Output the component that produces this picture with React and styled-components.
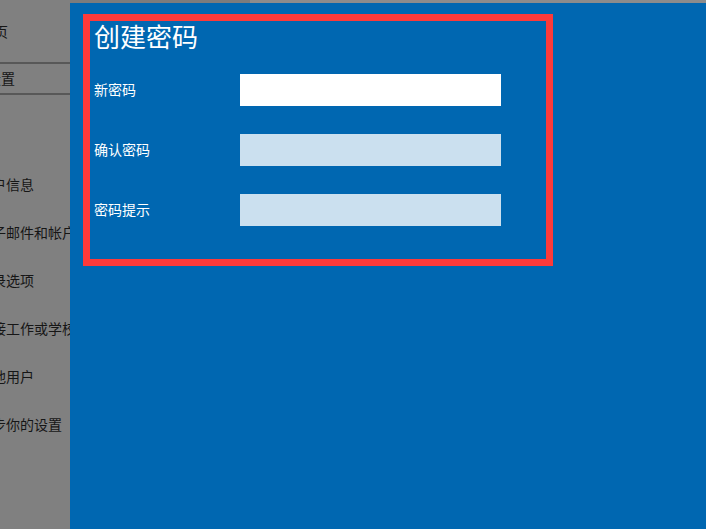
import React from "react";
import styled, { createGlobalStyle } from "styled-components";

const GlobalStyle = createGlobalStyle`
    body {
        margin: 0;
        font-family: "Noto Sans CJK SC", "Noto Sans", sans-serif;
    }
`;

const navItems = ["帐户信息", "电子邮件和帐户", "登录选项", "连接工作或学校帐户", "其他用户", "同步你的设置"];

const fields = [
    { label: "新密码", active: true },
    { label: "确认密码", active: false },
    { label: "密码提示", active: false },
];

function App() {
    return (
        <>
            <GlobalStyle />
            <Screen>
                <SidePane>
                    <HomeRow>主页</HomeRow>
                    <SearchBox>查找设置</SearchBox>
                    <NavList>
                        {navItems.map((item) => (
                            <NavItem key={item}>{item}</NavItem>
                        ))}
                    </NavList>
                </SidePane>
                <Dialog>
                    <TopStrip>
                        <StripDark />
                    </TopStrip>
                    <BlueArea>
                        <Frame>
                            <Title>创建密码</Title>
                            <Form>
                                {fields.map((field) => (
                                    <FieldRow key={field.label}>
                                        <Label>{field.label}</Label>
                                        <Input $active={field.active} />
                                    </FieldRow>
                                ))}
                            </Form>
                        </Frame>
                    </BlueArea>
                </Dialog>
            </Screen>
        </>
    );
}

const Screen = styled.div`
    display: flex;
    width: 706px;
    height: 529px;
    overflow: hidden;
`;
const SidePane = styled.div`
    width: 70px;
    flex-shrink: 0;
    background-color: #808080;
    overflow: hidden;
    display: flex;
    flex-direction: column;
    padding-top: 7px;
    box-sizing: border-box;
    color: #161616;
    font-size: 14px;
`;
const HomeRow = styled.div`
    height: 48px;
    line-height: 48px;
    margin-left: -20px;
    white-space: nowrap;
`;
const SearchBox = styled.div`
    margin-top: 7px;
    margin-left: -41px;
    width: 140px;
    height: 29px;
    line-height: 29px;
    border-top: 2px solid #585858;
    border-bottom: 2px solid #585858;
    white-space: nowrap;
`;
const NavList = styled.div`
    margin-top: 65px;
    display: flex;
    flex-direction: column;
`;
const NavItem = styled.div`
    height: 48px;
    line-height: 48px;
    margin-left: -22px;
    white-space: nowrap;
`;
const Dialog = styled.div`
    flex: 1;
    display: flex;
    flex-direction: column;
`;
const TopStrip = styled.div`
    height: 3px;
    background-color: #8c8c8c;
    display: flex;
`;
const StripDark = styled.div`
    width: 180px;
    background-color: #7c7c7c;
`;
const BlueArea = styled.div`
    flex: 1;
    background-color: #0067b1;
    padding: 11px 0 0 13px;
`;
const Frame = styled.div`
    width: 470px;
    height: 252px;
    box-sizing: border-box;
    border: 7px solid #fd3a3a;
    padding: 0 0 0 4px;
    color: #ffffff;
`;
const Title = styled.h1`
    margin: -1px 0 0;
    font-size: 26px;
    font-weight: 400;
    line-height: 32px;
`;
const Form = styled.div`
    margin-top: 22px;
    display: flex;
    flex-direction: column;
    gap: 28px;
`;
const FieldRow = styled.div`
    display: flex;
    align-items: center;
`;
const Label = styled.div`
    width: 146px;
    font-size: 14px;
    line-height: 20px;
    margin-top: -3px;
`;
const Input = styled.div`
    width: 261px;
    height: 32px;
    background-color: ${(p) => (p.$active ? "#ffffff" : "#cbe0ef")};
`;

export default App;
